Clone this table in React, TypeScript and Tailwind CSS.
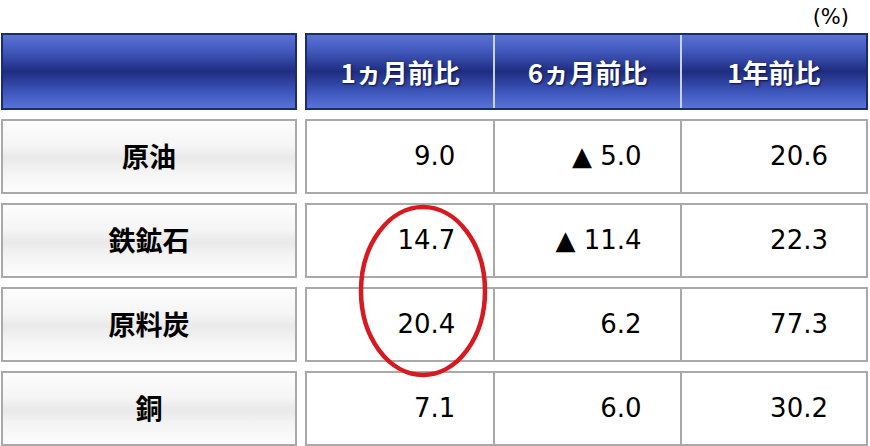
const rows = [
  { name: '原油', vals: ['9.0', '▲ 5.0', '20.6'] },
  { name: '鉄鉱石', vals: ['14.7', '▲ 11.4', '22.3'] },
  { name: '原料炭', vals: ['20.4', '6.2', '77.3'] },
  { name: '銅', vals: ['7.1', '6.0', '30.2'] },
]

const heads = ['1ヵ月前比', '6ヵ月前比', '1年前比']

const blue =
  'bg-[linear-gradient(to_bottom,#5a72d4_0%,#4159bd_22%,#1f2c80_50%,#3d56bc_78%,#5873d8_100%)] border-2 border-[#1c2a6e]'
const silver =
  'bg-[linear-gradient(to_bottom,#fdfdfd_0%,#f5f5f5_35%,#e9e9e9_52%,#f4f4f4_72%,#fdfdfd_100%)] border-2 border-[#a9a9a9]'

function App() {
  return (
    <main className="relative h-[446px] w-[870px] overflow-hidden bg-white font-['DejaVu_Sans',sans-serif] text-black">
      <div className="flex h-[33px] items-center justify-end pr-[21px] pt-[2px] text-[21px]">(%)</div>

      <div className="grid grid-cols-[296px_563px] gap-x-[8px] gap-y-[9px] pl-[1px]">
        <div className={`h-[77px] ${blue}`} />
        <div className={`grid h-[77px] grid-cols-3 ${blue}`}>
          {heads.map((h, i) => (
            <div
              key={h}
              className={`flex items-center justify-center font-['Noto_Sans_CJK_JP',sans-serif] text-[26px] font-bold text-white [text-shadow:1px_1px_2px_#0b1240] ${
                i > 0 ? 'border-l-2 border-[#c9d2f2]' : ''
              }`}
            >
              {h}
            </div>
          ))}
        </div>

        {rows.map((r) => (
          <div key={r.name} className="contents">
            <div
              className={`flex h-[75px] items-center justify-center font-['Noto_Sans_CJK_JP',sans-serif] text-[27px] font-bold ${silver}`}
            >
              {r.name}
            </div>
            <div className="grid h-[75px] grid-cols-3 border-2 border-[#a9a9a9] bg-white">
              {r.vals.map((v, i) => (
                <div
                  key={i}
                  className={`flex items-center justify-end pr-[38px] text-[26px] ${
                    i > 0 ? 'border-l-2 border-[#a9a9a9]' : ''
                  }`}
                >
                  {v}
                </div>
              ))}
            </div>
          </div>
        ))}
      </div>

      <svg className="absolute left-[357px] top-[203px]" width="132" height="176" viewBox="0 0 132 176">
        <ellipse cx="66" cy="88" rx="62" ry="84" fill="none" stroke="#d71a20" strokeWidth="4.5" />
      </svg>
    </main>
  )
}

export default App
